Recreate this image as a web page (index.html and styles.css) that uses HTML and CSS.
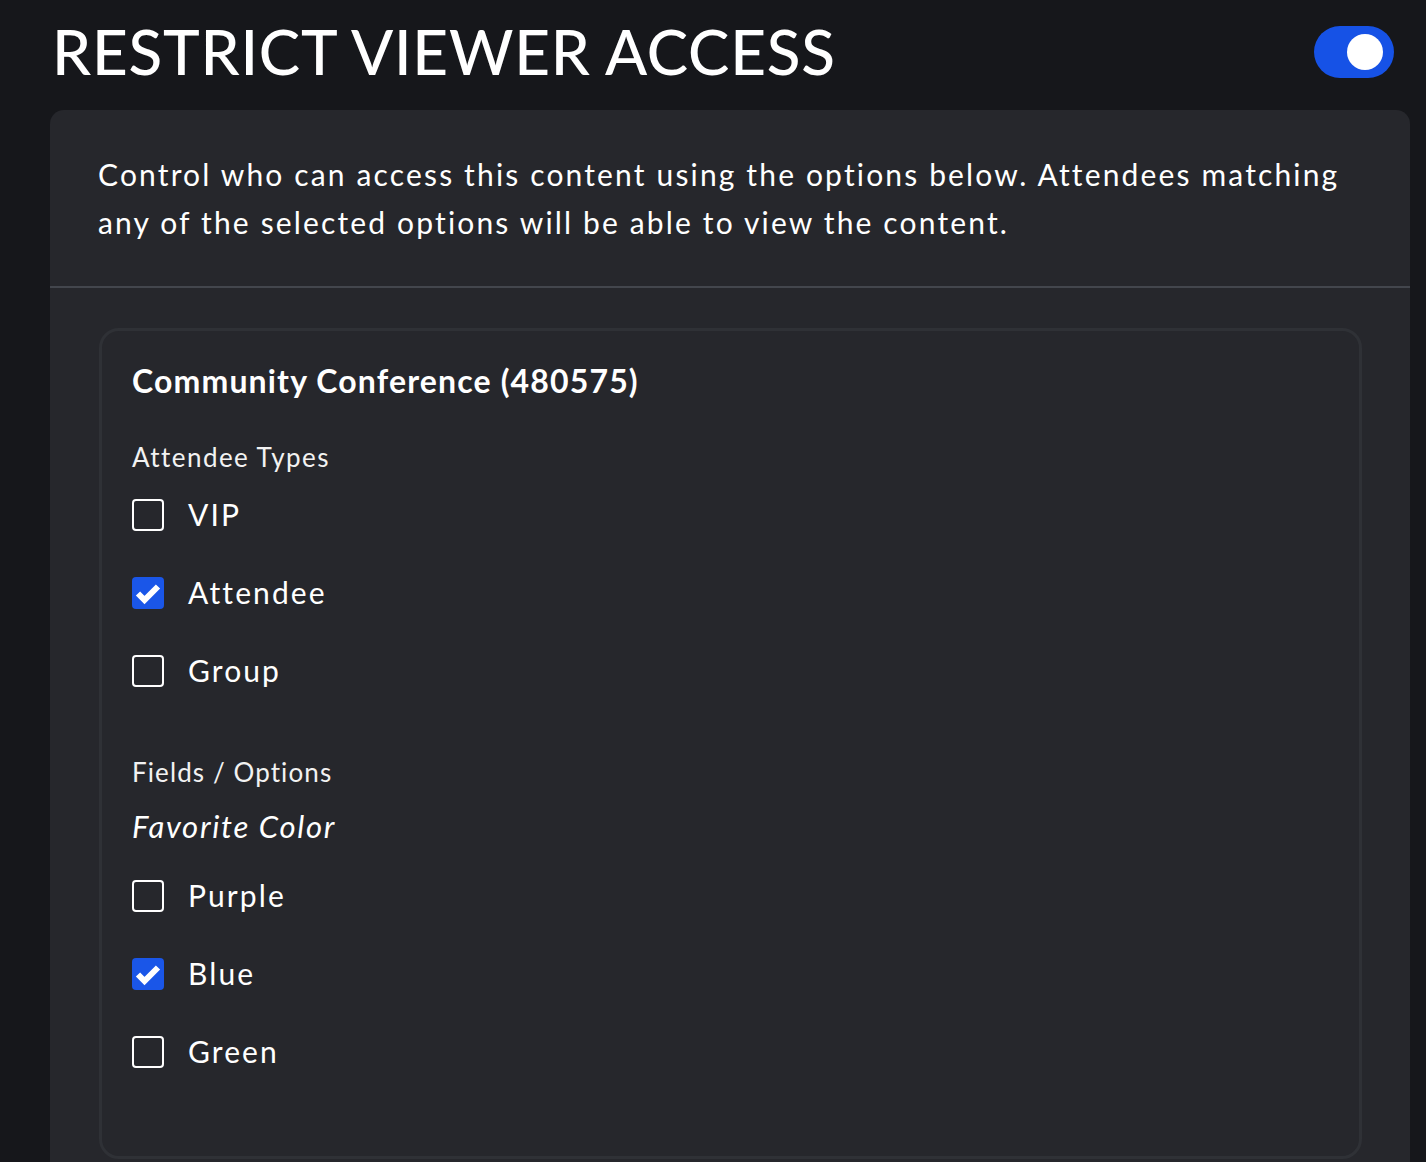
FILE: index.html
```html
<!DOCTYPE html>
<html lang="en">
<head>
<meta charset="utf-8">
<title>Restrict Viewer Access</title>
<link rel="stylesheet" href="styles.css">
</head>
<body>
<div class="page">
  <header class="header">
    <h1 class="title">RESTRICT VIEWER ACCESS</h1>
    <div class="toggle" role="switch" aria-checked="true"><span class="knob"></span></div>
  </header>
  <section class="panel">
    <p class="desc">Control who can access this content using the options below. Attendees matching any of the selected options will be able to view the content.</p>
    <div class="panel-body">
      <div class="card">
        <h2 class="card-title">Community Conference (480575)</h2>
        <div class="group-label">Attendee Types</div>
        <ul class="options">
          <li class="option"><span class="box"></span><span class="label">VIP</span></li>
          <li class="option"><span class="box checked"><svg viewBox="0 0 32 32" width="32" height="32"><path d="M6 16.5 L12.5 23 L26 9.5" fill="none" stroke="#fff" stroke-width="6" stroke-linecap="butt" stroke-linejoin="miter"/></svg></span><span class="label">Attendee</span></li>
          <li class="option"><span class="box"></span><span class="label">Group</span></li>
        </ul>
        <div class="group-label fields">Fields / Options</div>
        <div class="field-name">Favorite Color</div>
        <ul class="options">
          <li class="option"><span class="box"></span><span class="label">Purple</span></li>
          <li class="option"><span class="box checked"><svg viewBox="0 0 32 32" width="32" height="32"><path d="M6 16.5 L12.5 23 L26 9.5" fill="none" stroke="#fff" stroke-width="6" stroke-linecap="butt" stroke-linejoin="miter"/></svg></span><span class="label">Blue</span></li>
          <li class="option"><span class="box"></span><span class="label">Green</span></li>
        </ul>
      </div>
    </div>
  </section>
</div>
</body>
</html>
```

FILE: styles.css
```css
html, body {
  margin: 0;
  padding: 0;
  background: #16171b;
  color: #ffffff;
  font-family: "Lato", "Open Sans", sans-serif;
  overflow: hidden;
}

.page {
  padding: 0 16px 0 50px;
  height: 1162px;
  display: flex;
  flex-direction: column;
}

.header {
  height: 110px;
  display: flex;
  align-items: center;
  justify-content: space-between;
  padding: 0 16px 0 2px;
  box-sizing: border-box;
}

.title {
  margin: 0;
  font-size: 62px;
  font-weight: 500;
  letter-spacing: 0.8px;
  line-height: 1;
  margin-top: -8px;
}

.toggle {
  width: 80px;
  height: 52px;
  border-radius: 26px;
  background: #1652e6;
  display: flex;
  align-items: center;
  justify-content: flex-end;
  padding-right: 11px;
  box-sizing: border-box;
  margin-top: -6px;
}

.knob {
  width: 36px;
  height: 36px;
  border-radius: 50%;
  background: #ffffff;
}

.panel {
  flex: 1;
  background: #26272c;
  border-radius: 14px 14px 0 0;
}

.desc {
  margin: 0;
  padding: 40px 48px 40px 48px;
  font-size: 30px;
  line-height: 48px;
  letter-spacing: 2.15px;
  border-bottom: 2px solid #43464d;
}

.panel-body {
  padding: 40px 48px 0 49px;
}

.card {
  border: 3px solid #2f3136;
  border-radius: 20px;
  padding: 30px 30px 66px 30px;
}

.card-title {
  margin: 0;
  font-size: 32px;
  font-weight: 700;
  line-height: 40px;
  letter-spacing: 1.15px;
}

.group-label {
  margin-top: 38px;
  font-size: 26px;
  line-height: 36px;
  letter-spacing: 1.45px;
  color: #f2f2f2;
}

.group-label.fields {
  margin-top: 45px;
  letter-spacing: 1.1px;
}

.field-name {
  margin-top: 16px;
  margin-bottom: 10px;
  font-size: 31px;
  line-height: 40px;
  font-style: italic;
  letter-spacing: 1.7px;
}

.options {
  list-style: none;
  margin: 0;
  padding: 0;
}

.option {
  height: 78px;
  display: flex;
  align-items: center;
}

.box {
  width: 32px;
  height: 32px;
  box-sizing: border-box;
  border: 2px solid #ffffff;
  border-radius: 4px;
  flex: none;
  display: flex;
  align-items: center;
  justify-content: center;
  margin-top: 2px;
}

.box svg {
  display: block;
  flex: none;
}

.box.checked {
  background: #1a56e8;
  border: none;
}

.label {
  margin-left: 24px;
  font-size: 30px;
  letter-spacing: 2.1px;
}
```
